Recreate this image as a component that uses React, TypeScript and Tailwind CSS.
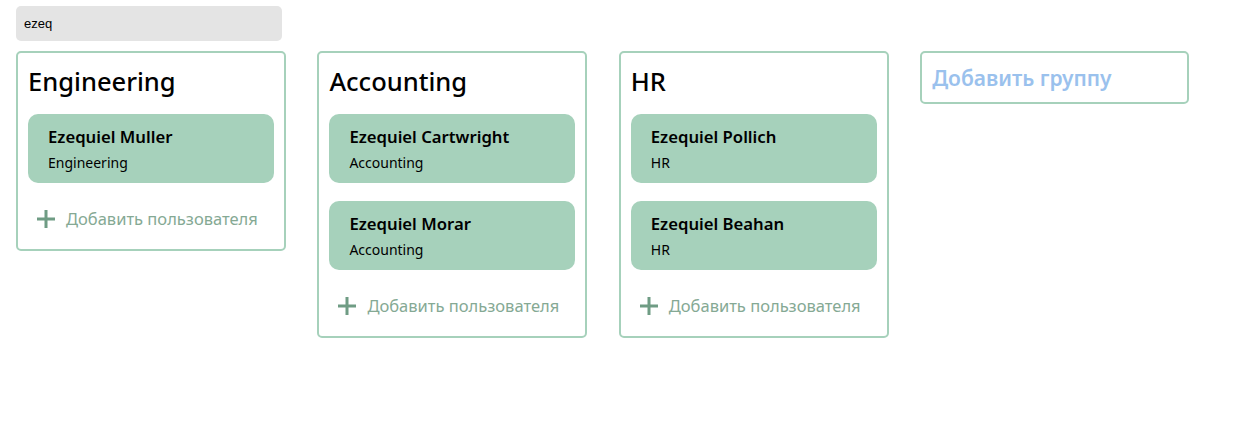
import React, { useState } from "react";

type User = { name: string; dept: string };

const groups: { title: string; users: User[] }[] = [
  { title: "Engineering", users: [{ name: "Ezequiel Muller", dept: "Engineering" }] },
  {
    title: "Accounting",
    users: [
      { name: "Ezequiel Cartwright", dept: "Accounting" },
      { name: "Ezequiel Morar", dept: "Accounting" },
    ],
  },
  {
    title: "HR",
    users: [
      { name: "Ezequiel Pollich", dept: "HR" },
      { name: "Ezequiel Beahan", dept: "HR" },
    ],
  },
];

function PlusIcon() {
  return (
    <svg width="20" height="20" viewBox="0 0 20 20" className="shrink-0">
      <path d="M10 1v18M1 10h18" stroke="#6f9c84" strokeWidth="3" />
    </svg>
  );
}

function UserCard({ user }: { user: User }) {
  return (
    <div className="bg-[#a6d1bb] rounded-[10px] pl-5 pr-3 pt-[11px] pb-[10px] flex flex-col">
      <span className="text-[16.7px] font-semibold leading-[24px] text-black">{user.name}</span>
      <span className="text-[14px] leading-[20px] mt-[4px] text-black">{user.dept}</span>
    </div>
  );
}

function Group({ title, users }: { title: string; users: User[] }) {
  return (
    <div className="w-[270px] shrink-0 border-2 border-[#a6d1bb] rounded-[5px] px-[10px] pt-[10px] pb-[18px] bg-white">
      <h2 className="text-[25.5px] leading-[36px] font-medium text-black">{title}</h2>
      <div className="mt-[15px] flex flex-col gap-[18px]">
        {users.map((u) => (
          <UserCard key={u.name} user={u} />
        ))}
      </div>
      <button className="mt-[24px] h-[24px] flex items-center gap-[10px] pl-[8px] text-[16.5px] text-[#85a994]">
        <PlusIcon />
        Добавить пользователя
      </button>
    </div>
  );
}

export default function App() {
  const [query, setQuery] = useState("ezeq");
  return (
    <div className="min-h-screen bg-white px-4 pt-[6px] font-['Noto_Sans',sans-serif]">
      <input
        value={query}
        onChange={(e) => setQuery(e.target.value)}
        className="w-[266px] h-[35px] rounded-[5px] bg-[#e4e4e4] px-2 text-[13px] text-black outline-none font-['Liberation_Sans',sans-serif]"
      />
      <div className="mt-[10px] flex items-start gap-[31.4px]">
        {groups.map((g) => (
          <Group key={g.title} title={g.title} users={g.users} />
        ))}
        <div className="w-[269px] h-[53px] shrink-0 border-2 border-[#a6d1bb] rounded-[5px] px-[10px] pt-[3px] flex items-center">
          <span className="text-[21px] font-semibold text-[#9ac1ed]">Добавить группу</span>
        </div>
      </div>
    </div>
  );
}
